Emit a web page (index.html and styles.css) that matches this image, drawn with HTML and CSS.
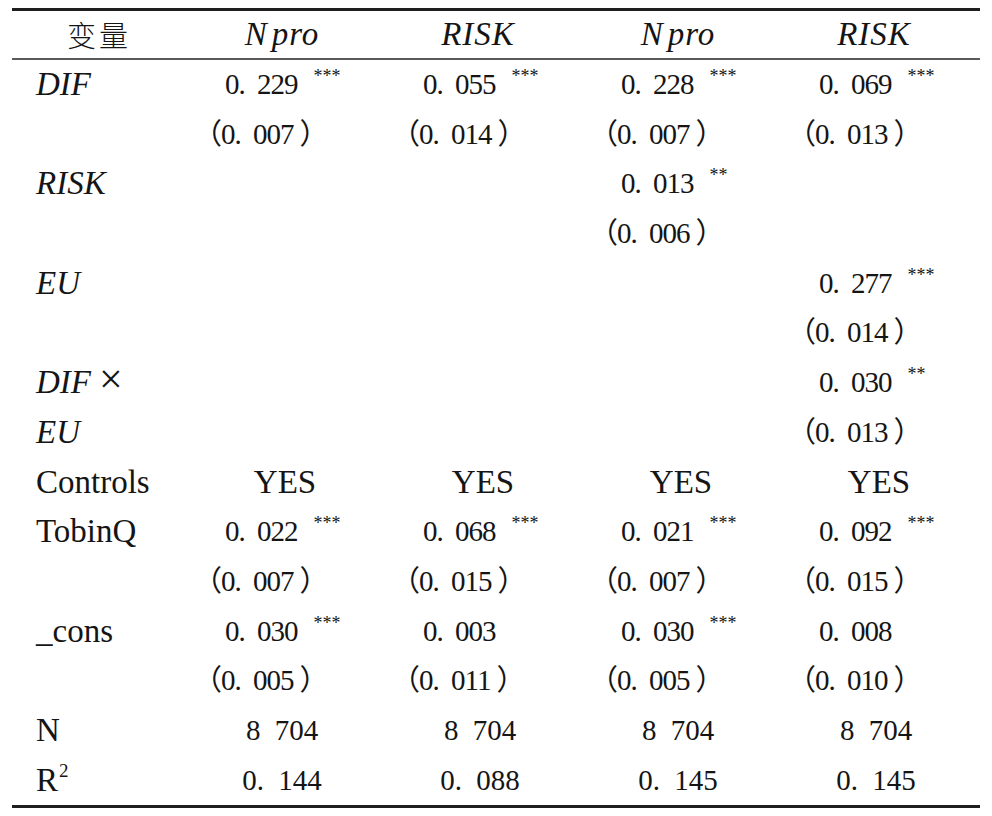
FILE: index.html
```html
<!DOCTYPE html>
<html lang="zh">
<head>
<meta charset="utf-8">
<title>回归结果</title>
<link rel="stylesheet" href="styles.css">
</head>
<body>
<div class="table">
  <div class="row head">
    <div class="cell hcjk">变量</div>
    <div class="cell hv"><i>N</i><i>pro</i></div>
    <div class="cell hv"><i>RISK</i></div>
    <div class="cell hv"><i>N</i><i>pro</i></div>
    <div class="cell hv"><i>RISK</i></div>
  </div>

  <div class="row">
    <div class="cell lab"><i>DIF</i></div>
    <div class="cell coef">0. 229<span class="st">***</span></div>
    <div class="cell coef">0. 055<span class="st">***</span></div>
    <div class="cell coef">0. 228<span class="st">***</span></div>
    <div class="cell coef">0. 069<span class="st">***</span></div>
  </div>
  <div class="row">
    <div class="cell lab"></div>
    <div class="cell se">（0. 007<span class="rp">）</span></div>
    <div class="cell se">（0. 014<span class="rp">）</span></div>
    <div class="cell se">（0. 007<span class="rp">）</span></div>
    <div class="cell se">（0. 013<span class="rp">）</span></div>
  </div>

  <div class="row">
    <div class="cell lab"><i>RISK</i></div>
    <div class="cell coef"></div>
    <div class="cell coef"></div>
    <div class="cell coef">0. 013<span class="st">**</span></div>
    <div class="cell coef"></div>
  </div>
  <div class="row">
    <div class="cell lab"></div>
    <div class="cell se"></div>
    <div class="cell se"></div>
    <div class="cell se">（0. 006<span class="rp">）</span></div>
    <div class="cell se"></div>
  </div>

  <div class="row">
    <div class="cell lab"><i>EU</i></div>
    <div class="cell coef"></div>
    <div class="cell coef"></div>
    <div class="cell coef"></div>
    <div class="cell coef">0. 277<span class="st">***</span></div>
  </div>
  <div class="row">
    <div class="cell lab"></div>
    <div class="cell se"></div>
    <div class="cell se"></div>
    <div class="cell se"></div>
    <div class="cell se">（0. 014<span class="rp">）</span></div>
  </div>

  <div class="row">
    <div class="cell lab"><i>DIF</i><span class="times">×</span></div>
    <div class="cell coef"></div>
    <div class="cell coef"></div>
    <div class="cell coef"></div>
    <div class="cell coef">0. 030<span class="st">**</span></div>
  </div>
  <div class="row">
    <div class="cell lab"><i>EU</i></div>
    <div class="cell se"></div>
    <div class="cell se"></div>
    <div class="cell se"></div>
    <div class="cell se">（0. 013<span class="rp">）</span></div>
  </div>

  <div class="row">
    <div class="cell lab">Controls</div>
    <div class="cell ctr yes">YES</div>
    <div class="cell ctr yes">YES</div>
    <div class="cell ctr yes">YES</div>
    <div class="cell ctr yes">YES</div>
  </div>

  <div class="row">
    <div class="cell lab">TobinQ</div>
    <div class="cell coef">0. 022<span class="st">***</span></div>
    <div class="cell coef">0. 068<span class="st">***</span></div>
    <div class="cell coef">0. 021<span class="st">***</span></div>
    <div class="cell coef">0. 092<span class="st">***</span></div>
  </div>
  <div class="row">
    <div class="cell lab"></div>
    <div class="cell se">（0. 007<span class="rp">）</span></div>
    <div class="cell se">（0. 015<span class="rp">）</span></div>
    <div class="cell se">（0. 007<span class="rp">）</span></div>
    <div class="cell se">（0. 015<span class="rp">）</span></div>
  </div>

  <div class="row">
    <div class="cell lab">_cons</div>
    <div class="cell coef">0. 030<span class="st">***</span></div>
    <div class="cell coef">0. 003</div>
    <div class="cell coef">0. 030<span class="st">***</span></div>
    <div class="cell coef">0. 008</div>
  </div>
  <div class="row">
    <div class="cell lab"></div>
    <div class="cell se">（0. 005<span class="rp">）</span></div>
    <div class="cell se">（0. 011<span class="rp">）</span></div>
    <div class="cell se">（0. 005<span class="rp">）</span></div>
    <div class="cell se">（0. 010<span class="rp">）</span></div>
  </div>

  <div class="row">
    <div class="cell lab">N</div>
    <div class="cell ctr num">8 704</div>
    <div class="cell ctr num">8 704</div>
    <div class="cell ctr num">8 704</div>
    <div class="cell ctr num">8 704</div>
  </div>
  <div class="row">
    <div class="cell lab">R<span class="sq">2</span></div>
    <div class="cell ctr num">0. 144</div>
    <div class="cell ctr num">0. 088</div>
    <div class="cell ctr num">0. 145</div>
    <div class="cell ctr num">0. 145</div>
  </div>
</div>
</body>
</html>
```

FILE: styles.css
```css
* { box-sizing: border-box; }
html, body { margin: 0; background: #fff; }
body {
  font-family: "Liberation Serif", "Noto Sans CJK SC", serif;
  color: #151515;
}
.table {
  margin: 8px 0 0 12px;
  width: 968px;
  border-top: 3px solid #1e1e1e;
  border-bottom: 3px solid #1e1e1e;
}
.row {
  display: grid;
  grid-template-columns: 171px repeat(4, 198px);
  height: 49.7px;
}
.head {
  height: 49px;
  border-bottom: 2px solid #5a5a5a;
}
.cell {
  white-space: nowrap;
  line-height: 49.7px;
}
.head .cell { line-height: 47px; }
.hcjk {
  text-align: center;
  font-family: "Noto Sans CJK SC", sans-serif;
  font-weight: 300;
  font-size: 29px;
  letter-spacing: 3px;
  padding-left: 3px;
}
.hv {
  text-align: center;
  font-size: 33px;
  letter-spacing: 1px;
}
.hv i:first-child { margin-right: 4px; }
.lab {
  padding-left: 24px;
  font-size: 33px;
}
.times {
  font-size: 42px;
  margin-left: 8px;
  font-weight: 300;
  line-height: 0;
}
.sq {
  font-size: 19px;
  vertical-align: 14px;
  line-height: 0;
  margin-left: 1px;
}
.coef, .se, .num {
  font-size: 29px;
  letter-spacing: -1px;
  word-spacing: 6px;
}
.coef { padding-left: 42px; }
.se { padding-left: 10px; }
.rp { margin-left: 6px; }
.ctr { text-align: center; }
.num { letter-spacing: 0; word-spacing: 7px; }
.yes {
  font-size: 33px;
  letter-spacing: 0;
  padding-left: 6px;
}
.st {
  font-size: 18px;
  letter-spacing: 0;
  margin-left: 16px;
  vertical-align: 12px;
  line-height: 0;
}
```
